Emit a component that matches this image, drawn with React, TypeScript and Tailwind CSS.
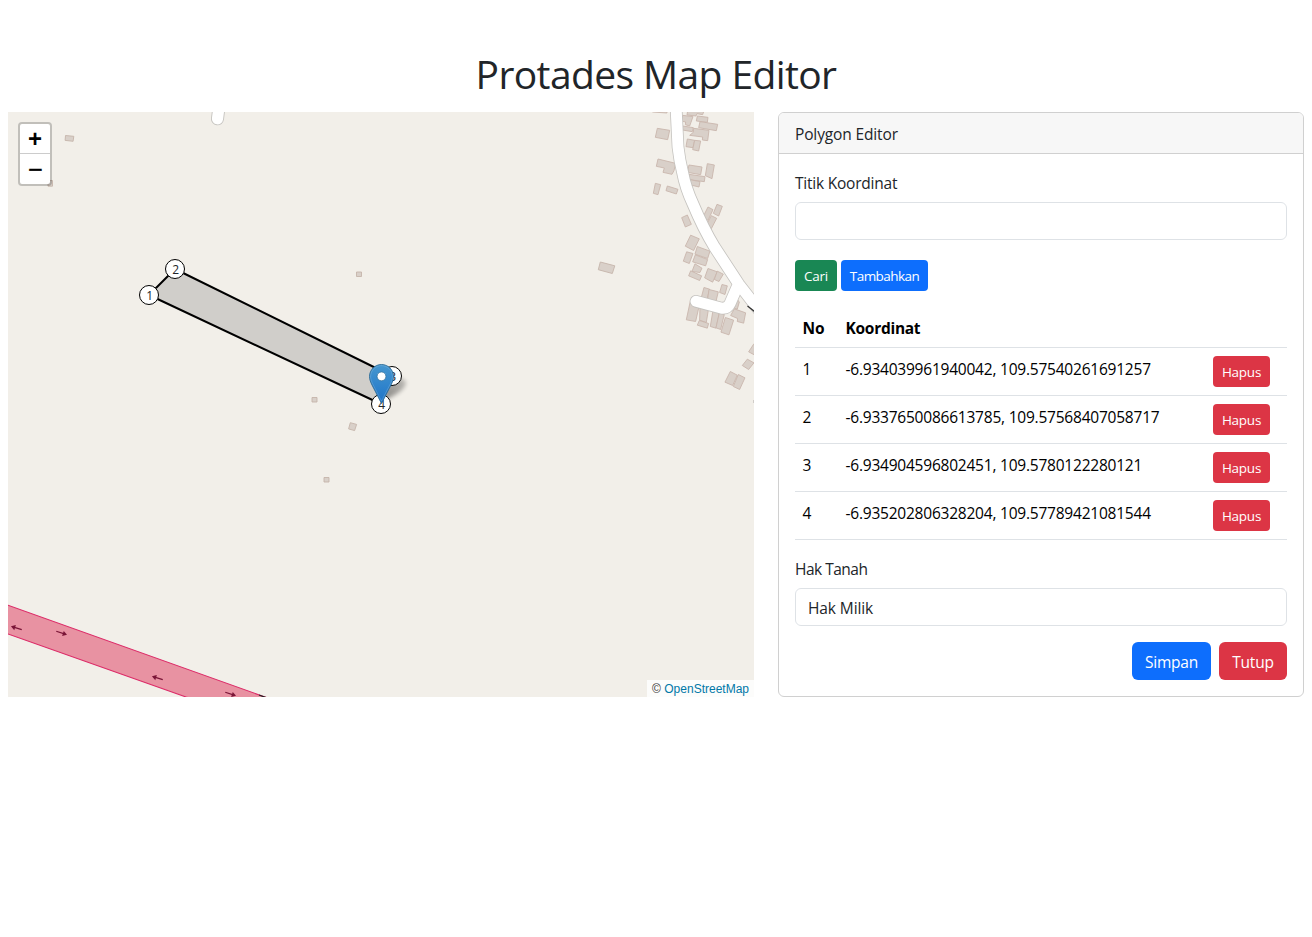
import React from "react";

const UI = "font-['Open_Sans','Noto_Sans',sans-serif]";

const coordinates = [
  "-6.934039961940042, 109.57540261691257",
  "-6.9337650086613785, 109.57568407058717",
  "-6.934904596802451, 109.5780122280121",
  "-6.935202806328204, 109.57789421081544",
];

const vertices = [
  { n: 1, x: 149, y: 295 },
  { n: 2, x: 175, y: 269 },
  { n: 3, x: 392, y: 376 },
  { n: 4, x: 381, y: 404 },
];

const northBuildings = [
  "37,0 81,0 81,15 37,12",
  "52,61 89,67 83,95 46,88",
  "143,8 192,8 188,20 171,17 168,24 141,21",
  "128,22 159,26 153,43 149,54 136,50 137,42 127,40",
  "172,24 204,28 202,43 169,39",
  "180,41 233,49 229,68 176,59",
  "128,54 160,59 157,71 127,66",
  "161,61 207,67 203,98 187,96 188,87 149,82 160,73",
  "142,93 164,97 159,119 138,116",
  "164,97 182,99 176,129 158,125",
  "54,153 107,166 102,188 96,199 69,193 73,180 49,175",
  "147,171 186,177 182,200 142,193",
  "202,167 223,171 216,212 196,203",
  "147,199 195,206 193,221 148,215",
  "150,215 180,221 177,237 148,230",
  "46,226 62,230 54,260 40,256",
  "82,234 114,244 109,258 78,248",
  "142,321 154,349 136,357 125,329",
  "204,297 219,305 204,337 189,327",
  "231,289 247,295 236,324 220,316",
  "214,323 230,331 214,362 199,351",
];

const southBuildings = [
  "151,29 177,40 160,75 135,62",
  "171,63 209,77 202,99 164,86",
  "139,79 158,84 147,114 129,107",
  "165,88 202,102 196,121 157,109",
  "164,115 185,128 179,141 155,138",
  "151,136 184,151 178,165 145,151",
  "203,129 231,139 217,170 193,157",
  "231,137 249,146 236,168 222,162",
  "245,177 261,181 254,207 238,201",
  "191,186 208,191 200,222 183,216",
  "206,192 234,199 227,228 202,222",
  "150,227 176,244 166,288 138,283",
  "179,246 204,254 198,291 178,284",
  "177,285 205,294 201,308 171,299",
  "218,255 238,260 227,308 210,303",
  "237,262 252,267 241,312 227,307",
  "255,276 280,284 266,328 242,320",
  "282,250 316,262 310,293 291,288 292,279 271,270",
  "289,218 297,230 291,251 282,248",
  "340,356 352,361 344,389 325,379",
  "321,401 341,412 325,432 306,420",
  "270,438 291,449 277,480 254,470",
  "294,447 314,457 298,492 279,483",
];

const mainRoad =
  "M676.300 100V112L678 147Q679.500 160 682.500 172Q685.500 188 693 204Q703 228 714.500 247L738.700 284L762 314M738 285 730 303.500Q727.500 309 721 308L696 301.300";

function RoadArrow({ x, y, angle }: { x: number; y: number; angle: number }) {
  return (
    <g transform={`translate(${x} ${y}) rotate(${angle})`}>
      <path d="M-5.5 0H3" stroke="#7a1537" strokeWidth="1.2" />
      <path d="M1.5-2.7 5.8 0 1.5 2.7Z" fill="#7a1537" />
    </g>
  );
}

function MapDrawing() {
  return (
    <svg viewBox="8 112 746 585" className="block h-full w-full">
      <defs>
        <linearGradient id="pin" x1="0" y1="0" x2="0" y2="1">
          <stop offset="0" stopColor="#4697cf" />
          <stop offset="1" stopColor="#1e74c9" />
        </linearGradient>
        <linearGradient id="shade" x1="0" y1="1" x2="1" y2="0">
          <stop offset="0" stopColor="#000" stopOpacity=".65" />
          <stop offset="1" stopColor="#000" stopOpacity=".3" />
        </linearGradient>
        <filter id="soft" x="-50%" y="-50%" width="200%" height="200%">
          <feGaussianBlur stdDeviation="2.2" />
        </filter>
      </defs>
      <rect x="8" y="112" width="746" height="585" fill="#f2efe9" />

      <g fill="#d9d0c9" stroke="#c8b5ab" strokeWidth="2.6">
        <g transform="translate(640 108) scale(.33333)">
          {northBuildings.map((p) => <polygon key={p} points={p} />)}
        </g>
        <g transform="translate(640.300 225.500) scale(.33333)">
          {southBuildings.map((p) => <polygon key={p} points={p} />)}
        </g>
      </g>
      <g fill="#d9d0c9" stroke="#c5b4aa" strokeWidth=".9">
        <path d="m65.5 135.5 8.3.8-.7 5-8-.9Z" />
        <path d="M48 180.500h4.500v5.700H48Z" />
        <path d="M356.500 272h5v4.500h-5ZM312 397.500h5v4.500h-5ZM324 477.500h5v4.500h-5Z" />
        <path d="m350.300 422.700 6.300 1.700-2 6.200-6-1.700Z" />
        <path d="m600.300 262 14.500 3.800-2.500 7.700-14-3.800Z" />
      </g>

      <g fill="none" strokeLinecap="round" strokeLinejoin="round">
        <path d="M219.600 102 217.500 118.800" stroke="#c5c3bf" strokeWidth="13" />
        <path d={mainRoad} stroke="#c5c3bf" strokeWidth="12.600" />
        <path d="M219.600 102 217.500 118.800" stroke="#fff" strokeWidth="11.200" />
        <path d={mainRoad} stroke="#fff" strokeWidth="11" />
      </g>
      <path d="m747.500 306 7 5.500" stroke="#333" strokeWidth="1.300" />
      <path d="M753.500 400v3" stroke="#d0ccc8" />

      <path d="M0 602.500 8 605.200 265 697 290 706 215 706 186 697 8 634 0 631Z" fill="#e892a2" stroke="#dc2a67" strokeWidth="1.100" />
      <path d="m259 695 7 2.500" stroke="#222" strokeWidth="1.300" />
      <RoadArrow x={16.5} y={628} angle={197} />
      <RoadArrow x={61.5} y={633} angle={18} />
      <RoadArrow x={157.5} y={678} angle={197} />
      <RoadArrow x={230.5} y={694} angle={18} />

      <path d="M149 295 175 269 392 376 381 404Z" fill="#d0ceca" stroke="#000" strokeWidth="2" strokeLinejoin="round" />
      <path d="M382 402 388 381Q400 374 406 382Q406 390 389 398Z" fill="url(#shade)" filter="url(#soft)" opacity=".7" />
      {vertices.map((v) => (
        <g key={v.n}>
          <circle cx={v.x} cy={v.y} r="9.500" fill="#fff" stroke="#000" />
          <text x={v.x + 0.5} y={v.y + 4.5} textAnchor="middle" fill="#212529" className="font-['Open_Sans',sans-serif] text-[12px]">
            {v.n}
          </text>
        </g>
      ))}
      <g transform="translate(369 364)">
        <path d="M12.500.5C5.900.5.500 5.900.500 12.500c0 3.100 1.200 5.800 2.500 8.500l9.500 18.500L22 21c1.300-2.700 2.500-5.400 2.500-8.500C24.500 5.900 19.100.5 12.500.5Z" fill="url(#pin)" stroke="#2e6c97" strokeWidth=".9" />
        <path d="M12.500 1.600C6.500 1.600 1.600 6.500 1.600 12.500c0 2.800 1.100 5.400 2.400 8l8.500 16.600L21 20.500c1.300-2.600 2.400-5.200 2.400-8C23.400 6.500 18.500 1.600 12.500 1.600Z" fill="none" stroke="#fff" strokeOpacity=".15" />
        <circle cx="12.500" cy="12.400" r="4.400" fill="#fff" stroke="#2e6c97" strokeWidth=".7" />
      </g>
    </svg>
  );
}

const small = "flex h-[31px] items-center justify-center rounded-[4px] pt-px text-[13.5px] text-white";
const large = "flex h-[38px] items-center justify-center rounded-[6px] pt-[3px] text-[15.5px] tracking-[-0.2px] text-white";

export default function App() {
  return (
    <div className={`${UI} h-[937px] overflow-hidden bg-white px-2 pt-12 text-[15.5px] leading-6 tracking-[-0.22px] text-[#212529]`}>
      <h1 className="mb-2 h-14 text-center text-[39px] leading-[52px] tracking-[-0.6px]">Protades Map Editor</h1>
      <main className="flex h-[585px] gap-6">
        <section className="relative w-[746px] shrink-0 overflow-hidden">
          <MapDrawing />
          <div className="absolute left-[10px] top-[10px] w-[34px] overflow-hidden rounded-[4px] border-2 border-black/20 bg-white bg-clip-padding font-['Liberation_Sans',sans-serif] tracking-normal text-black">
            <button className="flex h-[30px] w-full items-center justify-center border-b border-[#ccc] pt-px text-[24px] font-bold">+</button>
            <button className="flex h-[30px] w-full items-center justify-center pb-px pl-px text-[25px] font-normal [-webkit-text-stroke:0.4px_black]">−</button>
          </div>
          <div className="absolute bottom-0 right-0 h-[17px] bg-white/80 px-[5px] font-['Liberation_Sans',sans-serif] text-[12px] leading-[18px] tracking-normal text-[#333]">
            © <a className="text-[#0078a8]">OpenStreetMap</a>
          </div>
        </section>

        <section className="flex flex-1 flex-col overflow-hidden rounded-[6px] border border-[#d0d0d0]">
          <header className="h-[41px] shrink-0 border-b border-[#d0d0d0] bg-[#f7f7f7] px-4 pt-[9px] tracking-[-0.14px]">Polygon Editor</header>
          <div className="flex flex-1 flex-col px-4 pt-[17px]">
            <label>Titik Koordinat</label>
            <input className="mt-[7px] h-[38px] w-full shrink-0 rounded-[6px] border border-[#dee2e6] px-3" />
            <div className="mt-5 flex gap-1">
              <button className={`${small} w-[42px] bg-[#198754] tracking-[-0.2px]`}>Cari</button>
              <button className={`${small} w-[87px] bg-[#0d6efd] tracking-[-0.55px]`}>Tambahkan</button>
            </div>
            <table className="mt-4 w-full table-fixed border-collapse text-black">
              <colgroup>
                <col className="w-[43px]" />
                <col />
                <col className="w-[82px]" />
              </colgroup>
              <thead>
                <tr className="h-10 border-b border-[#dee2e6] text-left align-top">
                  <th className="pb-0 pl-[7.5px] pt-[9px]">No</th>
                  <th className="pb-0 pl-[7.5px] pt-[9px] tracking-[-0.28px]">Koordinat</th>
                  <th />
                </tr>
              </thead>
              <tbody>
                {coordinates.map((c, i) => (
                  <tr key={c} className="h-12 border-b border-[#dee2e6] align-top">
                    <td className="pl-[7.5px] pt-[9px]">{i + 1}</td>
                    <td className="whitespace-nowrap pl-[7.5px] pt-[9px]">{c}</td>
                    <td className="px-2 pt-2">
                      <button className={`${small} w-[57px] bg-[#dc3545] tracking-[-0.25px]`}>Hapus</button>
                    </td>
                  </tr>
                ))}
              </tbody>
            </table>
            <label className="mt-[17px] tracking-[-0.5px]">Hak Tanah</label>
            <div className="mt-[7px] h-[38px] shrink-0 rounded-[6px] border border-[#dee2e6] px-3 pt-[7px] tracking-[-0.1px]">Hak Milik</div>
            <div className="mt-4 flex justify-end gap-2">
              <button className={`${large} w-[79px] bg-[#0d6efd]`}>Simpan</button>
              <button className={`${large} w-[68px] bg-[#dc3545]`}>Tutup</button>
            </div>
          </div>
        </section>
      </main>
    </div>
  );
}
